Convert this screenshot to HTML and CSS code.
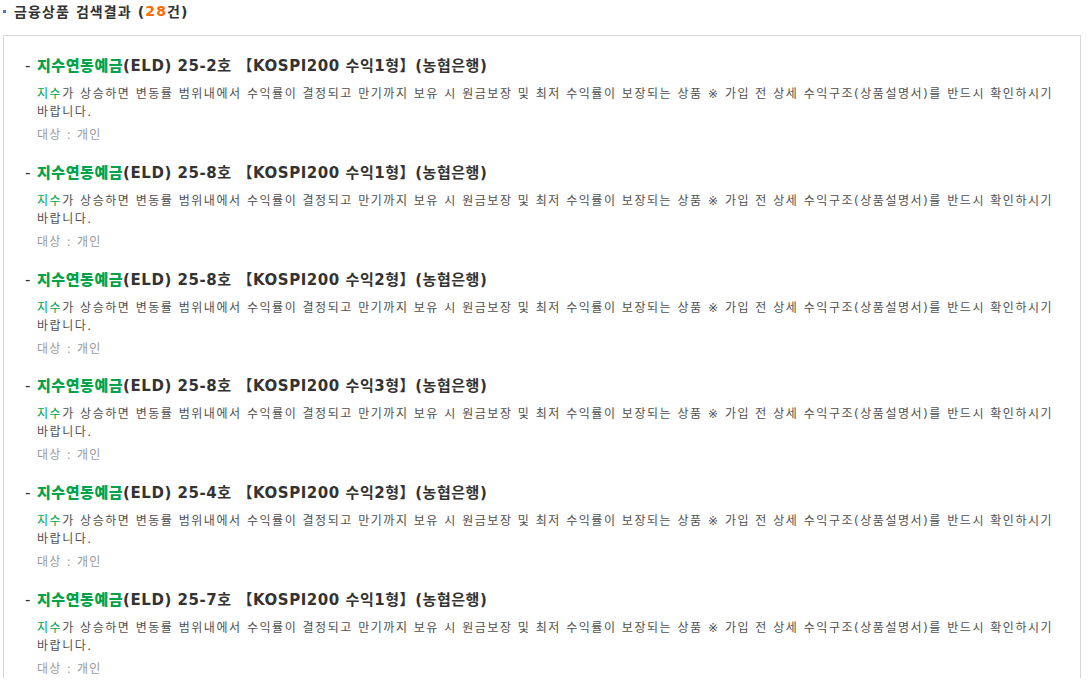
FILE: index.html
```html
<!DOCTYPE html>
<html>
<head>
    <meta charset="utf-8">
    <title>금융상품 검색결과</title>
    <link rel="stylesheet" href="styles.css">
</head>
<body>
    <h2 class="sch-title"><span class="bullet"></span>금융상품 검색결과 (<em>28</em>건)</h2>

    <div class="result-box">
        <ul class="prod-list">
            <li>
                <p class="prod-name"><span class="dash">-</span><strong>지수연동예금</strong>(ELD) 25-2호 【KOSPI200 수익1형】(농협은행)</p>
                <p class="prod-desc"><span class="hl">지수</span>가 상승하면 변동률 범위내에서 수익률이 결정되고 만기까지 보유 시 원금보장 및 최저 수익률이 보장되는 상품 ※ 가입 전 상세 수익구조(상품설명서)를 반드시 확인하시기 바랍니다.</p>
                <p class="prod-target">대상 : 개인</p>
            </li>
            <li>
                <p class="prod-name"><span class="dash">-</span><strong>지수연동예금</strong>(ELD) 25-8호 【KOSPI200 수익1형】(농협은행)</p>
                <p class="prod-desc"><span class="hl">지수</span>가 상승하면 변동률 범위내에서 수익률이 결정되고 만기까지 보유 시 원금보장 및 최저 수익률이 보장되는 상품 ※ 가입 전 상세 수익구조(상품설명서)를 반드시 확인하시기 바랍니다.</p>
                <p class="prod-target">대상 : 개인</p>
            </li>
            <li>
                <p class="prod-name"><span class="dash">-</span><strong>지수연동예금</strong>(ELD) 25-8호 【KOSPI200 수익2형】(농협은행)</p>
                <p class="prod-desc"><span class="hl">지수</span>가 상승하면 변동률 범위내에서 수익률이 결정되고 만기까지 보유 시 원금보장 및 최저 수익률이 보장되는 상품 ※ 가입 전 상세 수익구조(상품설명서)를 반드시 확인하시기 바랍니다.</p>
                <p class="prod-target">대상 : 개인</p>
            </li>
            <li>
                <p class="prod-name"><span class="dash">-</span><strong>지수연동예금</strong>(ELD) 25-8호 【KOSPI200 수익3형】(농협은행)</p>
                <p class="prod-desc"><span class="hl">지수</span>가 상승하면 변동률 범위내에서 수익률이 결정되고 만기까지 보유 시 원금보장 및 최저 수익률이 보장되는 상품 ※ 가입 전 상세 수익구조(상품설명서)를 반드시 확인하시기 바랍니다.</p>
                <p class="prod-target">대상 : 개인</p>
            </li>
            <li>
                <p class="prod-name"><span class="dash">-</span><strong>지수연동예금</strong>(ELD) 25-4호 【KOSPI200 수익2형】(농협은행)</p>
                <p class="prod-desc"><span class="hl">지수</span>가 상승하면 변동률 범위내에서 수익률이 결정되고 만기까지 보유 시 원금보장 및 최저 수익률이 보장되는 상품 ※ 가입 전 상세 수익구조(상품설명서)를 반드시 확인하시기 바랍니다.</p>
                <p class="prod-target">대상 : 개인</p>
            </li>
            <li>
                <p class="prod-name"><span class="dash">-</span><strong>지수연동예금</strong>(ELD) 25-7호 【KOSPI200 수익1형】(농협은행)</p>
                <p class="prod-desc"><span class="hl">지수</span>가 상승하면 변동률 범위내에서 수익률이 결정되고 만기까지 보유 시 원금보장 및 최저 수익률이 보장되는 상품 ※ 가입 전 상세 수익구조(상품설명서)를 반드시 확인하시기 바랍니다.</p>
                <p class="prod-target">대상 : 개인</p>
            </li>
        </ul>
    </div>
</body>
</html>
```

FILE: styles.css
```css
body {
    margin: 0;
    background: #fff;
    font-family: "DejaVu Sans", "Noto Sans CJK KR", sans-serif;
    color: #333;
}

p {
    margin: 0;
}

/* 검색결과 타이틀 */
.sch-title {
    display: flex;
    align-items: center;
    height: 22px;
    margin: 0 0 13px 0;
    font-size: 14px;
    font-weight: bold;
    letter-spacing: 1.1px;
    color: #333;
}

.sch-title .bullet {
    width: 3px;
    height: 3px;
    margin: 1px 8px 0 3px;
    background: #3f7cc0;
}

.sch-title em {
    font-style: normal;
    color: #ff6a00;
}

/* 결과 박스 */
.result-box {
    width: 1076px;
    margin-left: 3px;
    padding-top: 20px;
    border: 1px solid #d5d8dc;
    border-bottom: 0;
}

.prod-list {
    list-style: none;
    margin: 0;
    padding: 0 0 0 33px;
}

.prod-list li {
    margin-bottom: 18.8px;
}

.prod-name {
    margin-left: -12px;
    height: 20px;
    line-height: 20px;
    font-size: 15px;
    font-weight: bold;
    letter-spacing: 0.55px;
    color: #333;
}

.prod-name .dash {
    display: inline-block;
    width: 12px;
    font-weight: normal;
    letter-spacing: 0;
}

.prod-name strong {
    color: #00a34a;
}

.prod-desc {
    margin-top: 9px;
    padding-right: 12px;
    font-size: 12px;
    line-height: 18px;
    letter-spacing: 1.53px;
    word-break: keep-all;
    color: #505050;
}

.prod-desc .hl {
    color: #00a34a;
}

.prod-target {
    margin-top: 5px;
    font-size: 12px;
    line-height: 18px;
    letter-spacing: 1.25px;
    color: #999;
}
```
